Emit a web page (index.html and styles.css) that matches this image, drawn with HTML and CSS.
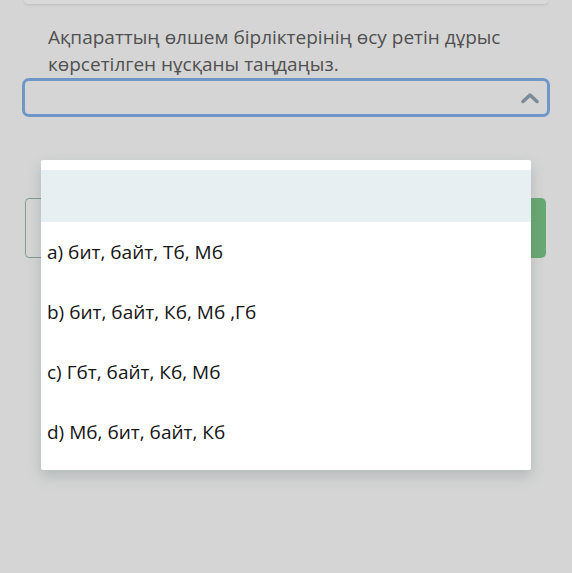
FILE: index.html
```html
<!DOCTYPE html>
<html lang="kk">
<head>
	<meta charset="UTF-8">
	<title>Тест</title>
	<link rel="stylesheet" href="styles.css">
</head>
<body>
	<div class="page">
		<div class="card-top"></div>
		<p class="question">Ақпараттың өлшем бірліктерінің өсу ретін дұрыс көрсетілген нұсқаны таңдаңыз.</p>
		<div class="select">
			<svg class="chevron" width="18" height="12" viewBox="0 0 18 12">
				<path d="M2 9.5 L9 3 L16 9.5" fill="none" stroke="#7b8a96" stroke-width="3.4" stroke-linecap="round" stroke-linejoin="round"/>
			</svg>
		</div>
		<div class="actions">
			<div class="answer"></div>
			<div class="btn"></div>
		</div>

		<!-- выпадающий список -->
		<ul class="dropdown">
			<li class="empty on"></li>
			<li>a) бит, байт, Тб, Мб</li>
			<li>b) бит, байт, Кб, Мб ,Гб</li>
			<li>c) Гбт, байт, Кб, Мб</li>
			<li>d) Мб, бит, байт, Кб</li>
		</ul>
	</div>
</body>
</html>
```
FILE: styles.css
```css
*{
	margin: 0;
	padding: 0;
	box-sizing: border-box;
}
ul li{
	list-style-type: none;
}
html,body{
	height: 100%;
	background: #d5d5d5;
}
body{
	font-family: "Open Sans", "Noto Sans", sans-serif;
}
.page{
	position: relative;
	height: 573px;
	overflow: hidden;
}
.card-top{
	margin: 0 24px;
	height: 4px;
	background: #d9d9d9;
	border-radius: 0 0 8px 8px;
	box-shadow: 0 1px 3px rgba(0,0,0,.12);
}
.question{
	padding: 20px 40px 0 48px;
	font-size: 19px;
	line-height: 27px;
	color: #505050;
	height: 74px;
}
.select{
	display: flex;
	align-items: center;
	justify-content: flex-end;
	margin: 0 22px;
	height: 39px;
	border: 3px solid #6e97c8;
	border-radius: 7px;
	padding-right: 8px;
}
.actions{
	display: flex;
	gap: 10px;
	margin: 81px 26px 0 25px;
	height: 60px;
}
.answer{
	flex: 1;
	border: 1px solid #7f9c8c;
	border-radius: 4px;
}
.btn{
	width: 100px;
	background: #68a872;
	border-radius: 5px;
}
.dropdown{
	position: absolute;
	left: 41px;
	top: 160px;
	width: 490px;
	padding: 10px 0 8px;
	background: #fff;
	border-radius: 2px;
	box-shadow: 0 6px 14px rgba(90,110,110,.28);
}
.dropdown li{
	height: 60px;
	line-height: 60px;
	padding-left: 6px;
	font-size: 19px;
	color: #151515;
}
.dropdown li.empty{
	height: 52px;
}
.dropdown li.on{
	background: #e8eff2;
}
```
